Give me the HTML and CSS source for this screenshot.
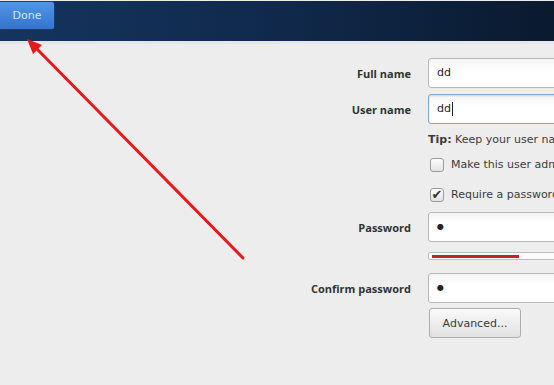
FILE: index.html
```html
<!DOCTYPE html>
<html lang="en">
  <head>
    <meta charset="UTF-8" />
    <meta name="viewport" content="width=device-width, initial-scale=1.0" />
    <title>Create User</title>
    <link rel="stylesheet" href="styles.css">
  </head>
  <body>
    <div class="topbar">
      <button class="btn-done">Done</button>
    </div>

    <form class="user-form">
      <div class="row row-first">
        <label class="field-label" for="fullName">Full name</label>
        <div class="input">dd</div>
      </div>

      <div class="row row-tight">
        <label class="field-label" for="userName">User name</label>
        <div class="input focused">dd<span class="caret"></span></div>
      </div>

      <div class="row row-tip">
        <div class="field-label"></div>
        <div class="tip"><strong>Tip:</strong> Keep your user name shorter than 32 characters</div>
      </div>

      <div class="row row-check">
        <div class="field-label"></div>
        <div class="check"><span class="box"></span>Make this user administrator</div>
      </div>

      <div class="row row-check2">
        <div class="field-label"></div>
        <div class="check"><span class="box checked">&#10004;</span>Require a password to use this account</div>
      </div>

      <div class="row row-pass">
        <label class="field-label">Password</label>
        <div class="input pw">&#9679;</div>
      </div>

      <div class="row row-bar">
        <div class="field-label"></div>
        <div class="strength"><div class="strength-fill" style="width: 87px"></div></div>
      </div>

      <div class="row row-confirm">
        <label class="field-label">Confirm password</label>
        <div class="input pw">&#9679;</div>
      </div>

      <div class="row row-adv">
        <div class="field-label"></div>
        <button type="button" class="btn-advanced">Advanced...</button>
      </div>
    </form>

    <!-- annotation arrow -->
    <svg class="annot" width="554" height="385" viewBox="0 0 554 385">
      <line x1="243" y1="258" x2="34" y2="46" stroke="#e8191b" stroke-width="3" stroke-linecap="round" />
      <polygon points="27,39 42,45 33,54" fill="#e8191b" />
    </svg>
  </body>
</html>
```

FILE: styles.css
```css
html,
body {
  margin: 0;
  padding: 0;
}

body {
  width: 554px;
  height: 385px;
  overflow: hidden;
  background-color: #ededed;
  font-family: "Open Sans", "DejaVu Sans", sans-serif;
  font-size: 11px;
  color: #2e3436;
  position: relative;
}

.topbar {
  height: 40px;
  background: linear-gradient(to right, #14345f, #10294b 50%, #0a1a2f);
  border-bottom: 3px solid #e3e6ea;
}

.btn-done {
  display: block;
  width: 55px;
  height: 29px;
  margin: 1px 0 0 0;
  padding: 0;
  border: 1px solid #1c3d6c;
  border-left: none;
  border-radius: 0 3px 3px 0;
  background: linear-gradient(to bottom, #5096e6, #3574cc);
  color: #d8e4f4;
  font-family: "DejaVu Sans", sans-serif;
  font-size: 11px;
}

.user-form {
  width: 600px;
}

.row {
  display: flex;
  align-items: center;
  gap: 17px;
}

.field-label {
  flex: 0 0 411px;
  text-align: right;
  font-weight: bold;
  font-size: 11px;
}

.row-first {
  margin-top: 14px;
}

.row-tight {
  margin-top: 6px;
}

.row-tip {
  margin-top: 8px;
}

.row-check {
  margin-top: 9px;
}

.row-check2 {
  margin-top: 14px;
}

.row-pass {
  margin-top: 9px;
}

.row-bar {
  margin-top: 10px;
}

.row-confirm {
  margin-top: 13px;
}

.row-adv {
  margin-top: 5px;
}

.input {
  flex: 0 0 auto;
  width: 160px;
  height: 28px;
  line-height: 28px;
  padding-left: 8px;
  background: linear-gradient(to bottom, #f4f4f4, #ffffff 40%);
  border: 1px solid #b9b9b9;
  border-radius: 3px;
  font-family: "DejaVu Sans", sans-serif;
  font-size: 11px;
  color: #222;
}

.input.focused {
  border-color: #8aa4c6;
  box-shadow: inset 0 1px 2px rgba(80, 120, 170, 0.25);
}

.input.pw {
  font-size: 8px;
}

.caret {
  display: inline-block;
  width: 1px;
  height: 14px;
  background: #222;
  vertical-align: middle;
  margin-left: 1px;
}

.tip {
  white-space: nowrap;
  color: #3c3c3c;
  font-family: "DejaVu Sans", sans-serif;
  font-size: 11px;
  line-height: 16px;
}

.check {
  display: flex;
  align-items: center;
  white-space: nowrap;
  padding-left: 2px;
  color: #3c3c3c;
  font-family: "DejaVu Sans", sans-serif;
  font-size: 11px;
  line-height: 16px;
}

.box {
  display: inline-block;
  width: 12px;
  height: 12px;
  margin-right: 7px;
  border: 1px solid #9c9c9c;
  border-radius: 3px;
  background: linear-gradient(to bottom, #fdfdfd, #e2e2e2);
  font-size: 13px;
  line-height: 12px;
  text-align: center;
  color: #2e3436;
}

.strength {
  flex: 0 0 auto;
  width: 160px;
  height: 6px;
  padding: 0 3px;
  display: flex;
  align-items: center;
  background: #fafafa;
  border: 1px solid #bdbdbd;
  border-radius: 2px;
}

.strength-fill {
  height: 3px;
  background: #c0242a;
}

.btn-advanced {
  width: 92px;
  height: 30px;
  margin-left: 1px;
  padding: 0;
  border: 1px solid #adadad;
  border-radius: 3px;
  background: linear-gradient(to bottom, #fafafa, #e1e1e1);
  color: #3a3a3a;
  font-family: "DejaVu Sans", sans-serif;
  font-size: 11px;
}

.annot {
  position: absolute;
  left: 0;
  top: 0;
  pointer-events: none;
}
```
